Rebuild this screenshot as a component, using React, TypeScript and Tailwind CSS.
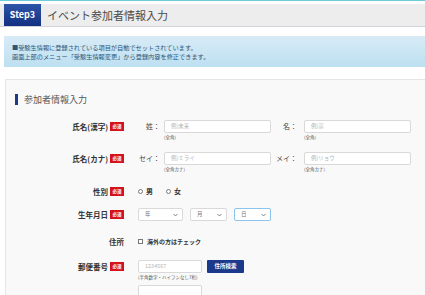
import React from "react";

const font = { fontFamily: '"Noto Sans CJK JP", "Noto Sans", sans-serif' };

const Badge = () => (
  <span className="ml-[2px] inline-flex h-[9px] w-[14px] items-center justify-center bg-[#d3121c] text-[4.5px] font-bold leading-none text-white">
    必須
  </span>
);

const Label = ({ text, required = true }: { text: string; required?: boolean }) => (
  <div className="flex w-[118px] shrink-0 items-center justify-end">
    <span className="text-[7.5px] font-bold leading-none text-[#333]">{text}</span>
    {required && <Badge />}
  </div>
);

const Input = ({ w, placeholder }: { w: string; placeholder: string }) => (
  <div
    className={`flex h-[13px] ${w} items-center rounded-[2px] border border-[#d9d9d9] bg-white pl-[6px] text-[5.5px] leading-none text-[#b5b5b5]`}
  >
    {placeholder}
  </div>
);

const Hint = ({ text }: { text: string }) => (
  <div className="mt-[1px] h-[7px] text-[4.5px] leading-[7px] text-[#555]">{text}</div>
);

const Chevron = () => (
  <svg width="5" height="4" viewBox="0 0 10 6" className="text-[#666]">
    <path d="M1 1l4 4 4-4" fill="none" stroke="currentColor" strokeWidth="1.6" />
  </svg>
);

const Select = ({ w, text, focus = false }: { w: string; text: string; focus?: boolean }) => (
  <div
    className={`flex h-[13px] ${w} items-center justify-between rounded-[2px] border bg-white pl-[6px] pr-[4px] text-[5.5px] leading-none text-[#777] ${
      focus ? "border-[#8cc4f0]" : "border-[#d9d9d9]"
    }`}
  >
    <span>{text}</span>
    <Chevron />
  </div>
);

const NameRow = ({
  label,
  a,
  b,
  pa,
  pb,
  hint,
}: {
  label: string;
  a: string;
  b: string;
  pa: string;
  pb: string;
  hint: string;
}) => (
  <div className="flex items-start">
    <div className="flex h-[13px] items-center">
      <Label text={label} />
    </div>
    <div className="ml-[14px] flex h-[13px] w-[22px] items-center justify-end text-[7px] leading-none text-[#444]">
      {a}
    </div>
    <div className="ml-[4px] flex flex-col">
      <Input w="w-[107px]" placeholder={pa} />
      <Hint text={hint} />
    </div>
    <div className="flex h-[13px] w-[26px] items-center justify-end text-[7px] leading-none text-[#444]">
      {b}
    </div>
    <div className="ml-[7px] flex flex-col">
      <Input w="w-[107px]" placeholder={pb} />
      <Hint text={hint} />
    </div>
  </div>
);

export default function App() {
  return (
    <div className="h-[295px] w-[425px] overflow-hidden bg-white" style={font}>
      <div className="h-[1px] bg-[#6ccbd6]" />
      <div className="mt-[3px] flex h-[23px] items-stretch border-b border-[#d2d2da] bg-[#ededed]">
        <div className="ml-[4px] flex w-[37px] items-center justify-center bg-gradient-to-b from-[#2f55a8] to-[#132f80] text-[9px] font-bold text-white">
          Step3
        </div>
        <div className="ml-[6px] flex items-center text-[11px] text-[#4a4a4a]">イベント参加者情報入力</div>
      </div>

      <div className="ml-[4px] mt-[9px] flex h-[31px] flex-col justify-center bg-gradient-to-b from-[#d8ebf6] to-[#bde0f1] pl-[8px] text-[6.2px] leading-[9px] text-[#2e5677]">
        <div>■受験生情報に登録されている項目が自動でセットされています。</div>
        <div>画面上部のメニュー「受験生情報変更」から登録内容を修正できます。</div>
      </div>

      <div className="ml-[5px] mt-[12px] h-[300px] w-[440px] border border-[#e6e6e6] bg-[#f9f9f9]">
        <div className="ml-[9px] mt-[14px] flex h-[11px] items-center">
          <div className="h-[11px] w-[3px] bg-[#1b3a8c]" />
          <div className="ml-[6px] text-[9px] leading-none text-[#555]">参加者情報入力</div>
        </div>

        <div className="mt-[15px]">
          <NameRow label="氏名(漢字)" a="姓：" b="名：" pa="例)未来" pb="例)涼" hint="(全角)" />
        </div>
        <div className="mt-[11px]">
          <NameRow label="氏名(カナ)" a="セイ：" b="メイ：" pa="例)ミライ" pb="例)リョウ" hint="(全角カナ)" />
        </div>

        <div className="mt-[12px] flex h-[13px] items-center">
          <Label text="性別" />
          <div className="ml-[14px] flex items-center gap-[3px] text-[7px] font-bold leading-none text-[#333]">
            <span className="h-[5px] w-[5px] rounded-full border border-[#777] bg-white" />
            <span>男</span>
            <span className="ml-[10px] h-[5px] w-[5px] rounded-full border border-[#777] bg-white" />
            <span>女</span>
          </div>
        </div>

        <div className="mt-[10px] flex h-[13px] items-center">
          <Label text="生年月日" />
          <div className="ml-[14px] flex items-center gap-[7px]">
            <Select w="w-[45px]" text="年" />
            <Select w="w-[37px]" text="月" />
            <Select w="w-[37px]" text="日" focus />
          </div>
        </div>

        <div className="mt-[14px] flex h-[13px] items-center">
          <Label text="住所" required={false} />
          <div className="ml-[14px] flex items-center gap-[4px] text-[6px] font-bold leading-none text-[#333]">
            <span className="h-[5px] w-[5px] border border-[#777] bg-white" />
            <span>海外の方はチェック</span>
          </div>
        </div>

        <div className="mt-[12px] flex items-start">
          <div className="flex h-[13px] items-center">
            <Label text="郵便番号" />
          </div>
          <div className="ml-[14px] flex flex-col">
            <Input w="w-[64px]" placeholder="1234567" />
            <Hint text="(半角数字・ハイフンなし7桁)" />
          </div>
          <div className="ml-[5px] flex h-[13px] w-[37px] items-center justify-center rounded-[1px] bg-[#1b3a8c] text-[5.5px] font-bold leading-none text-white">
            住所検索
          </div>
        </div>

        <div className="ml-[132px] mt-[4px]">
          <Input w="w-[64px]" placeholder="" />
        </div>
      </div>
    </div>
  );
}
